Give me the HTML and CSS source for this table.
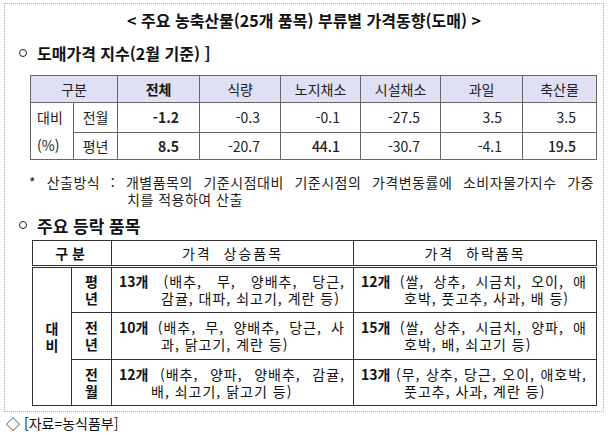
FILE: index.html
```html
<!DOCTYPE html>
<html lang="ko">
<head>
<meta charset="utf-8">
<link rel="stylesheet" href="styles.css">
</head>
<body>
<div class="box">
  <div class="title">&lt; 주요 농축산물(25개 품목) 부류별 가격동향(도매) &gt;</div>
  <div class="h"><span class="dot"></span>도매가격 지수(2월 기준) ]</div>
  <table class="idx">
    <colgroup>
      <col class="c43"><col class="c44"><col class="c82"><col class="c81"><col class="c80"><col class="c80"><col class="c82"><col class="c74">
    </colgroup>
    <tr class="hd">
      <th colspan="2">구분</th><th class="b">전체</th><th>식량</th><th>노지채소</th><th>시설채소</th><th>과일</th><th>축산물</th>
    </tr>
    <tr class="r1">
      <td rowspan="2" class="lab">대비<br>(%)</td>
      <td class="c">전월</td>
      <td class="num b">-1.2</td><td class="num">-0.3</td><td class="num">-0.1</td><td class="num">-27.5</td><td class="num">3.5</td><td class="num">3.5</td>
    </tr>
    <tr class="r2">
      <td class="c">평년</td>
      <td class="num b">8.5</td><td class="num">-20.7</td><td class="num m">44.1</td><td class="num">-30.7</td><td class="num">-4.1</td><td class="num m">19.5</td>
    </tr>
  </table>
  <div class="note">
    <div class="n1">* 산출방식 : 개별품목의 기준시점대비 기준시점의 가격변동률에 소비자물가지수 가중</div>
    <div class="n2">치를 적용하여 산출</div>
  </div>
  <div class="h h2"><span class="dot"></span>주요 등락 품목</div>
  <table class="items">
    <colgroup>
      <col class="c39"><col class="c40"><col class="c242"><col class="c243">
    </colgroup>
    <tr class="hd">
      <th colspan="2" class="b wide">구분</th><th>가격&nbsp; 상승품목</th><th>가격&nbsp; 하락품목</th>
    </tr>
    <tr>
      <td rowspan="3" class="v b">대<br>비</td>
      <td class="v b">평<br>년</td>
      <td class="txt"><div class="l1"><b>13개</b> (배추, 무, 양배추, 당근,</div><div class="l2">감귤, 대파, 쇠고기, 계란 등)</div></td>
      <td class="txt rt"><div class="l1"><b>12개</b> (쌀, 상추, 시금치, 오이, 애</div><div class="l2">호박, 풋고추, 사과, 배 등)</div></td>
    </tr>
    <tr class="mid">
      <td class="v b">전<br>년</td>
      <td class="txt"><div class="l1"><b>10개</b> (배추, 무, 양배추, 당근, 사</div><div class="l2">과, 닭고기, 계란 등)</div></td>
      <td class="txt rt"><div class="l1"><b>15개</b> (쌀, 상추, 시금치, 양파, 애</div><div class="l2">호박, 배, 쇠고기 등)</div></td>
    </tr>
    <tr>
      <td class="v b">전<br>월</td>
      <td class="txt"><div class="l1"><b>12개</b> (배추, 양파, 양배추, 감귤,</div><div class="l2 short">배, 쇠고기, 닭고기 등)</div></td>
      <td class="txt rt"><div class="l1"><b>13개</b> (무, 상추, 당근, 오이, 애호박,</div><div class="l2">풋고추, 사과, 계란 등)</div></td>
    </tr>
  </table>
</div>
<div class="src">◇ [자료=농식품부]</div>
</body>
</html>
```

FILE: styles.css
```css
body {
  margin: 0;
  font-family: "Noto Sans CJK KR", "Noto Sans", sans-serif;
  color: #111;
  background: #fff;
}

.box {
  margin: 3px 0 0 4px;
  width: 598px;
  height: 407px;
  border: 1px dotted #aaa;
}

.title {
  margin-top: 6px;
  height: 20px;
  line-height: 20px;
  text-align: center;
  font-weight: 700;
  font-size: 16px;
  color: #111;
}

.h {
  display: flex;
  align-items: center;
  height: 20px;
  margin-top: 13px;
  font-size: 16px;
  font-weight: 700;
  color: #111;
}

.dot {
  display: inline-block;
  width: 6px;
  height: 6px;
  border: 1px solid #222;
  border-radius: 50%;
  margin: 0 10px 0 14px;
}

.h2 {
  height: 22px;
  margin-top: 6px;
  font-size: 17px;
}

table {
  border-collapse: collapse;
  table-layout: fixed;
}

/* index table */
.idx {
  margin: 12px 0 0 25px;
  width: 566px;
  border: 1px solid #555;
  font-size: 14px;
  color: #222;
}

.c43 { width: 43px; }
.c44 { width: 44px; }
.c82 { width: 82px; }
.c81 { width: 81px; }
.c80 { width: 80px; }
.c74 { width: 74px; }

.idx th,
.idx td {
  border: 1px solid #666;
  padding: 0;
  white-space: nowrap;
}

.idx .hd {
  height: 27px;
  background: #dfe0f3;
}

.idx th {
  font-weight: 400;
  text-align: center;
}

.idx th.b { font-weight: 700; color: #111; }

.idx .r1 { height: 29px; }
.idx .r2 { height: 27px; }

.idx .lab {
  padding-left: 6px;
  line-height: 28px;
  vertical-align: middle;
}

.idx .c { text-align: center; }

.idx .num {
  text-align: right;
  padding-right: 20px;
}

.b { font-weight: 700; }
.m { font-weight: 500; }

/* footnote */
.note {
  margin: 14px 0 0 24px;
  width: 565px;
  font-size: 14px;
  line-height: 17px;
  letter-spacing: 0.5px;
  color: #222;
}

.n1 {
  white-space: nowrap;
  text-align: justify;
  text-align-last: justify;
}

.n2 { padding-left: 98px; }

/* items table */
.items {
  margin: 4px 0 0 27px;
  width: 564px;
  border: 1px solid #222;
  font-size: 14px;
  color: #111;
}

.c39 { width: 39px; }
.c40 { width: 40px; }
.c242 { width: 242px; }
.c243 { width: 243px; }

.items th,
.items td {
  border: 1px solid #333;
  padding: 0;
}

.items .hd { height: 26px; }

.items .hd th {
  border-bottom: 3px double #333;
  font-weight: 400;
  letter-spacing: 2px;
  text-align: center;
}

.items .hd th.b { font-weight: 700; }
.items .hd th.wide { letter-spacing: 4px; }

.items tr { height: 46px; }
.items tr.hd { height: 26px; }
.items tr.mid { height: 47px; }

.items .v {
  text-align: center;
  line-height: 17px;
  vertical-align: middle;
}

.items .txt {
  padding: 0 8px 0 7px;
  line-height: 17px;
  letter-spacing: 1px;
  vertical-align: middle;
}

.items .txt.rt { padding-right: 9px; }

.l1 {
  white-space: nowrap;
  text-align: justify;
  text-align-last: justify;
}

.l1 b { letter-spacing: 0; }

.l2 {
  white-space: nowrap;
  padding-left: 42px;
}

.l2.short { padding-left: 32px; }
.rt .l2 { padding-left: 43px; }

.src {
  margin: 1px 0 0 6px;
  height: 20px;
  line-height: 20px;
  font-size: 14px;
  color: #111;
}
```
